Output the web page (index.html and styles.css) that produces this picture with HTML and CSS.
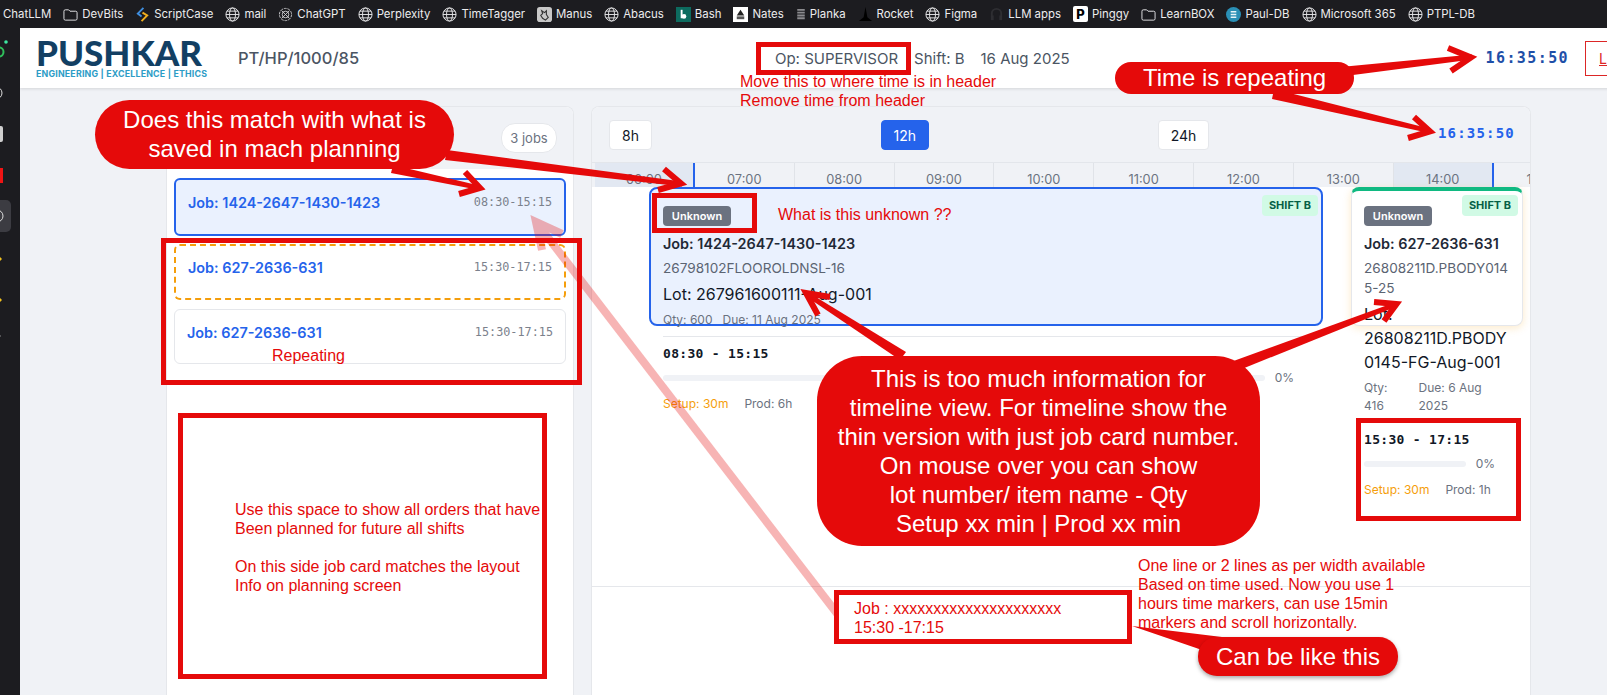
FILE: index.html
```html
<!DOCTYPE html>
<html>
<head>
  <meta charset="utf-8">
  <title>Shift Timeline</title>
  <link rel="stylesheet" href="styles.css">
</head>
<body>
  <svg class="defs" width="0" height="0">
    <symbol id="globe" viewBox="0 0 16 16">
      <g fill="none" stroke="#e8e8ea" stroke-width="1">
        <circle cx="8" cy="8" r="7"/>
        <ellipse cx="8" cy="8" rx="3.2" ry="7"/>
        <path d="M1 8h14M2 4.4h12M2 11.6h12"/>
      </g>
    </symbol>
    <symbol id="folder" viewBox="0 0 16 16">
      <path d="M1 4.5a1.500 1.500 0 0 1 1.500-1.500h3.500l1.500 1.500h6a1.500 1.500 0 0 1 1.500 1.500v6.500a1.500 1.500 0 0 1-1.500 1.500h-11a1.500 1.500 0 0 1-1.500-1.500z" fill="none" stroke="#e8e8ea"/>
    </symbol>
  </svg>

  <!-- browser bookmarks -->
  <div class="bookmarks">
    <span class="bm">ChatLLM</span>
    <span class="bm"><svg class="ic"><use href="#folder"/></svg>DevBits</span>
    <span class="bm"><svg class="ic" viewBox="0 0 16 16"><path d="M9 1 3 7l4 3" fill="none" stroke="#3f8fe0" stroke-width="2"/><path d="M8 6l5 3-6 6" fill="none" stroke="#f2b01e" stroke-width="2"/></svg>ScriptCase</span>
    <span class="bm"><svg class="ic"><use href="#globe"/></svg>mail</span>
    <span class="bm"><svg class="ic" viewBox="0 0 16 16"><g fill="none" stroke="#c9c9cc"><circle cx="8" cy="8" r="6.500" stroke-dasharray="3 1"/><circle cx="8" cy="8" r="3.500"/><path d="M4 4l8 8M12 4l-8 8"/></g></svg>ChatGPT</span>
    <span class="bm"><svg class="ic"><use href="#globe"/></svg>Perplexity</span>
    <span class="bm"><svg class="ic"><use href="#globe"/></svg>TimeTagger</span>
    <span class="bm"><svg class="ic" viewBox="0 0 16 16"><rect width="16" height="16" rx="3" fill="#c8c8c8"/><path d="M5 4l3 2 2-2v4l2 3-3 3-3-2-2-3 2-2z" fill="none" stroke="#333" stroke-width="1.200"/></svg>Manus</span>
    <span class="bm"><svg class="ic"><use href="#globe"/></svg>Abacus</span>
    <span class="bm"><svg class="ic" viewBox="0 0 16 16"><rect width="16" height="16" fill="#0d6b5f"/><path d="M6 3v9" stroke="#fff" stroke-width="2"/><circle cx="8.500" cy="10" r="2.500" fill="#fff"/></svg>Bash</span>
    <span class="bm"><svg class="ic" viewBox="0 0 16 16"><rect width="16" height="16" fill="#fff"/><path d="M4 9l4-6 4 6z" fill="#222"/><rect x="4" y="10" width="8" height="3" fill="#555"/></svg>Nates</span>
    <span class="bm"><svg class="ic ic-small" viewBox="0 0 10 16"><path d="M1 3h8M1 6h8M1 9h8M1 12h8" stroke="#8a8a8e" stroke-width="2"/></svg>Planka</span>
    <span class="bm"><svg class="ic" viewBox="0 0 16 16"><path d="M8 0 10 11 15 15H1L6 11z" fill="#000"/></svg>Rocket</span>
    <span class="bm"><svg class="ic"><use href="#globe"/></svg>Figma</span>
    <span class="bm"><svg class="ic" viewBox="0 0 16 16"><path d="M3 10V7a5 5 0 0 1 10 0v3" fill="none" stroke="#2e2e32" stroke-width="2"/><rect x="2" y="9" width="3" height="5" fill="#2e2e32"/><rect x="11" y="9" width="3" height="5" fill="#2e2e32"/></svg>LLM apps</span>
    <span class="bm"><span class="pinggy">P</span>Pinggy</span>
    <span class="bm"><svg class="ic"><use href="#folder"/></svg>LearnBOX</span>
    <span class="bm"><svg class="ic" viewBox="0 0 16 16"><circle cx="8" cy="8" r="8" fill="#2a8fb5"/><path d="M5 5h6M5 8h6M5 11h6" stroke="#e6f4f8" stroke-width="1.500"/></svg>Paul-DB</span>
    <span class="bm"><svg class="ic"><use href="#globe"/></svg>Microsoft 365</span>
    <span class="bm"><svg class="ic"><use href="#globe"/></svg>PTPL-DB</span>
  </div>

  <div class="window">
    <!-- edge of the browser sidebar -->
    <svg class="side-strip" width="20" height="667" viewBox="0 0 20 667">
      <circle cx="-1" cy="24" r="4.500" fill="none" stroke="#2fbf5b" stroke-width="2"/>
      <circle cx="6" cy="14" r="1.800" fill="#3ee6a0"/>
      <circle cx="-4" cy="65" r="6" fill="none" stroke="#ddd"/>
      <rect x="-8" y="98" width="11" height="16" rx="2" fill="#cfcfcf"/>
      <rect x="-8" y="140" width="11" height="15" fill="#f01414"/>
      <rect x="-6" y="172" width="17" height="32" rx="5" fill="#3c3c42"/>
      <circle cx="-3" cy="188" r="6" fill="none" stroke="#ddd"/>
      <path d="M0 229l2 2-2 2z" fill="#f2c21e"/>
      <path d="M0 270l2 2-2 2z" fill="#f2c21e"/>
      <path d="M0 308h1" stroke="#888"/>
    </svg>

    <div class="app">
      <header class="top-header">
        <div class="hdr-left">
          <div class="logo">
            <div class="logo-name">PUSHKAR</div>
            <div class="logo-tag">ENGINEERING | EXCELLENCE | ETHICS</div>
          </div>
          <div class="machine">PT/HP/1000/85</div>
        </div>
        <div class="hdr-center">
          <span>Op: SUPERVISOR</span>
          <span>Shift: B</span>
          <span>16 Aug 2025</span>
        </div>
        <div class="hdr-right">
          <span class="clock">16:35:50</span>
          <a class="logout">Logout</a>
        </div>
      </header>

      <main class="content">
        <section class="panel jobs-panel">
          <div class="panel-head">
            <span class="count-pill">3 jobs</span>
          </div>
          <div class="job-list">
            <div class="job-item active">
              <span class="job-no">Job: 1424-2647-1430-1423</span>
              <span class="job-time">08:30-15:15</span>
            </div>
            <div class="job-item next">
              <span class="job-no">Job: 627-2636-631</span>
              <span class="job-time">15:30-17:15</span>
            </div>
            <div class="job-item last">
              <span class="job-no">Job: 627-2636-631</span>
              <span class="job-time">15:30-17:15</span>
            </div>
          </div>
        </section>

        <section class="panel timeline-panel">
          <div class="range-bar">
            <button class="range-btn">8h</button>
            <button class="range-btn on">12h</button>
            <button class="range-btn">24h</button>
            <span class="range-clock">16:35:50</span>
          </div>
          <div class="axis">
            <div class="hour shade">06:00</div>
            <div class="hour">07:00</div>
            <div class="hour">08:00</div>
            <div class="hour">09:00</div>
            <div class="hour">10:00</div>
            <div class="hour">11:00</div>
            <div class="hour">12:00</div>
            <div class="hour">13:00</div>
            <div class="hour shade">14:00</div>
            <div class="hour">15:00</div>
          </div>
          <div class="track">
            <div class="block block-running">
              <span class="shift-tag">SHIFT B</span>
              <span class="status">Unknown</span>
              <div class="b-job">Job: 1424-2647-1430-1423</div>
              <div class="b-item">26798102FLOOROLDNSL-16</div>
              <div class="b-lot">Lot: 267961600111-Aug-001</div>
              <div class="b-meta"><span>Qty: 600</span><span>Due: 11 Aug 2025</span></div>
              <div class="b-time">08:30 - 15:15</div>
              <div class="b-progress"><div class="bar"></div><span>0%</span></div>
              <div class="b-split"><span class="setup">Setup: 30m</span><span>Prod: 6h</span></div>
            </div>
            <div class="block block-next">
              <span class="shift-tag">SHIFT B</span>
              <span class="status">Unknown</span>
              <div class="b-job">Job: 627-2636-631</div>
              <div class="b-item">26808211D.PBODY0145-25</div>
              <div class="b-lot">Lot: 26808211D.PBODY0145-FG-Aug-001</div>
              <div class="b-meta"><span>Qty: 416</span><span>Due: 6 Aug 2025</span></div>
              <div class="b-time">15:30 - 17:15</div>
              <div class="b-progress"><div class="bar"></div><span>0%</span></div>
              <div class="b-split"><span class="setup">Setup: 30m</span><span>Prod: 1h</span></div>
            </div>
          </div>
        </section>
      </main>
    </div>
  </div>

  <!-- review markup drawn over the screenshot -->
  <div class="markup">
    <svg class="arrows" width="1607" height="695" viewBox="0 0 1607 695">
      <g class="pale">
        <path d="M842 620 536 222"/>
        <path d="M562 234 536 222 542 250"/>
      </g>
      <g class="solid">
        <polygon points="1330,68 1472,54.500 1472,59.500 1330,78"/>
        <path d="M1448 48 1471 57.500 1451 71"/>
        <polygon points="1274,89 1431,129 1429,133 1272,99"/>
        <path d="M1414 117 1430 131.500 1408 138"/>
        <polygon points="393,165 481,186 479,190 391,173"/>
        <path d="M465 172 480 188 459 194"/>
        <polygon points="447,150 682,181.500 682,186.500 445,160"/>
        <path d="M664 169 681 183.500 658 190"/>
        <polygon points="906,352 806,291 804,295 900,360"/>
        <path d="M830 297 806 293 818 315"/>
        <polygon points="1228,363 1396,302 1398,306 1232,373"/>
        <path d="M1374 302 1396.500 304 1384 321"/>
        <polygon points="1132,626 1222,637 1202,650"/>
      </g>
    </svg>

    <div class="box box-op"></div>
    <div class="box box-unknown"></div>
    <div class="box box-list"></div>
    <div class="box box-future"></div>
    <div class="box box-times"></div>

    <div class="note note-move">Move this to where time is in header<br>Remove time from header</div>
    <div class="note note-repeat">Repeating</div>
    <div class="note note-unknown">What is this unknown ??</div>
    <div class="note note-future">Use this space to show all orders that have<br>Been planned for future all shifts<br><br>On this side job card matches the layout<br>Info on planning screen</div>
    <div class="note note-width">One line or 2 lines as per width available<br>Based on time used. Now you use 1<br>hours time markers, can use 15min<br>markers and scroll horizontally.</div>

    <div class="box box-thin">Job : xxxxxxxxxxxxxxxxxxxxx<br>15:30 -17:15</div>

    <div class="bubble bub-match">Does this match with what is<br>saved in mach planning</div>
    <div class="bubble bub-time">Time is repeating</div>
    <div class="bubble bub-info">This is too much information for<br>timeline view. For timeline show the<br>thin version with just job card number.<br>On mouse over you can show<br>lot number/ item name - Qty<br>Setup xx min | Prod xx min</div>
    <div class="bubble bub-like">Can be like this</div>
  </div>
</body>
</html>
```

FILE: styles.css
```css
html, body {
  margin: 0;
  padding: 0;
  width: 1607px;
  height: 695px;
  overflow: hidden;
  background: #1c1c20;
  font-family: "Inter", "Liberation Sans", sans-serif;
  color: #1f2937;
}

.defs {
  position: absolute;
}

/* bookmarks */
.bookmarks {
  height: 28px;
  display: flex;
  align-items: center;
  gap: 12px;
  padding-left: 3px;
  background: #1c1c20;
  color: #ececee;
  font-size: 11.4px;
  white-space: nowrap;
  overflow: hidden;
}

.bm {
  display: flex;
  align-items: center;
  gap: 4px;
}

.ic {
  width: 15px;
  height: 15px;
  flex: none;
}

.ic-small {
  width: 10px;
}

.pinggy {
  width: 15px;
  height: 16px;
  flex: none;
  background: #fff;
  border-radius: 2px;
  color: #000;
  font-size: 13px;
  font-weight: 800;
  line-height: 16px;
  text-align: center;
}

/* window */
.window {
  display: flex;
  height: 667px;
}

.side-strip {
  flex: none;
  display: block;
}

.app {
  width: 1587px;
  background: #f0f2f6;
  overflow: hidden;
}

.top-header {
  width: 1651px;
  height: 60px;
  box-sizing: border-box;
  padding: 0 16px;
  display: flex;
  align-items: center;
  justify-content: space-between;
  background: #fff;
  box-shadow: 0 1px 3px rgba(0, 0, 0, 0.12);
  position: relative;
}

.hdr-left {
  display: flex;
  align-items: center;
  gap: 32px;
}

.logo {
  width: 170px;
}

.logo-name {
  color: #123f63;
  font-family: "Lato", "Liberation Sans", sans-serif;
  font-size: 35px;
  font-weight: 900;
  line-height: 30px;
  white-space: nowrap;
}

.logo-tag {
  margin-top: 1px;
  color: #2c9cc6;
  font-size: 8.800px;
  font-weight: 700;
  line-height: 11px;
  letter-spacing: 0.2px;
  white-space: nowrap;
}

.machine {
  color: #4b5563;
  font-size: 16.500px;
  font-weight: 500;
}

.hdr-center {
  display: flex;
  gap: 16px;
  color: #4b5563;
  font-size: 15px;
}

.hdr-right {
  display: flex;
  align-items: center;
  gap: 16px;
}

.clock {
  color: #1e4fa8;
  font-family: "DejaVu Sans Mono", monospace;
  font-size: 15px;
  font-weight: 700;
  letter-spacing: 1.400px;
}

.logout {
  display: block;
  width: 70px;
  box-sizing: border-box;
  padding: 8px 13px;
  border: 1px solid #dc2626;
  color: #dc2626;
  font-size: 14px;
  text-decoration: underline;
}

/* main area */
.content {
  display: flex;
  gap: 17px;
  padding: 18px 0 0 146px;
  height: 607px;
  box-sizing: border-box;
}

.panel {
  border: 1px solid #e5e7eb;
  border-bottom: 0;
  border-radius: 8px 8px 0 0;
  box-sizing: border-box;
  overflow: hidden;
}

.jobs-panel {
  width: 408px;
  flex: none;
  background: #fff;
}

.panel-head {
  height: 62px;
  box-sizing: border-box;
  padding: 16px 16px 0 0;
  display: flex;
  justify-content: flex-end;
  align-items: flex-start;
  background: #f0f2f6;
}

.count-pill {
  width: 56px;
  height: 30px;
  box-sizing: border-box;
  border: 1px solid #e5e7eb;
  border-radius: 14px;
  background: #fff;
  color: #6b7280;
  font-size: 13px;
  line-height: 28px;
  text-align: center;
}

.job-list {
  padding: 9px 7px;
  display: flex;
  flex-direction: column;
  gap: 8px;
}

.job-item {
  height: 56px;
  box-sizing: border-box;
  padding: 13px 12px;
  display: flex;
  justify-content: space-between;
  border: 1px solid #e5e7eb;
  border-radius: 6px;
  background: #fff;
}

.job-item.active {
  height: 58px;
  border: 2px solid #2563eb;
  background: #eaf1fe;
}

.job-item.next {
  padding-top: 12px;
  border: 2px dashed #f59e0b;
}

.job-item.last {
  height: 55px;
  margin-top: 1px;
}

.job-no {
  color: #2563eb;
  font-size: 14.400px;
  font-weight: 600;
  line-height: 20px;
}

.job-time {
  color: #7b818c;
  font-family: "DejaVu Sans Mono", monospace;
  font-size: 11.800px;
  line-height: 18px;
}

.timeline-panel {
  width: 940px;
  flex: none;
  background: #fff;
}

.range-bar {
  height: 56px;
  box-sizing: border-box;
  padding: 13px 15px 0 17px;
  display: flex;
  justify-content: space-between;
  align-items: flex-start;
  background: #f0f2f6;
  border-bottom: 1px solid #e3e6eb;
}

.range-btn {
  height: 30px;
  padding: 0 12px;
  border: 1px solid #e5e7eb;
  border-radius: 4px;
  background: #fff;
  color: #111827;
  font-family: "Inter", sans-serif;
  font-size: 14px;
}

.range-btn.on {
  background: #2563eb;
  border-color: #2563eb;
  color: #fff;
}

.range-clock {
  margin-top: 5px;
  color: #2563eb;
  font-family: "DejaVu Sans Mono", monospace;
  font-size: 14px;
  font-weight: 700;
  letter-spacing: 1.200px;
}

.axis {
  height: 24px;
  padding-left: 3px;
  display: flex;
  background: #f0f2f6;
  white-space: nowrap;
}

.hour {
  width: 99.850px;
  height: 24px;
  flex: none;
  box-sizing: border-box;
  border-right: 1px solid #e0e3e8;
  color: #6b7280;
  font-size: 12.800px;
  line-height: 34px;
  text-align: center;
  overflow: hidden;
}

.hour.shade {
  background: #e2e8f2;
  border-right: 2px solid #2563eb;
}

.track {
  position: relative;
  height: 399px;
  border-bottom: 1px solid #e5e7eb;
  background: #fff;
}

.block {
  position: absolute;
  top: 0;
  height: 139px;
  box-sizing: border-box;
  border-radius: 8px;
  font-size: 12px;
}

.block-running {
  left: 57px;
  width: 674px;
  padding: 17px 12px 0 12px;
  border: 2px solid #2563eb;
  background: #eaf1fe;
}

.block-next {
  left: 759px;
  width: 172px;
  padding: 15px 12px 0 12px;
  border: 1px solid #e5e7eb;
  border-top: 4px solid #10b981;
  background: #fff;
  box-shadow: 0 2px 8px rgba(245, 158, 11, 0.22);
}

.shift-tag {
  position: absolute;
  top: 6px;
  right: 3px;
  width: 56px;
  height: 21px;
  border-radius: 4px;
  background: #d1fae5;
  color: #065f46;
  font-size: 11px;
  font-weight: 700;
  line-height: 21px;
  text-align: center;
}

.block-next .shift-tag {
  top: 4px;
  right: 4px;
}

.status {
  display: block;
  width: 68px;
  height: 20px;
  border-radius: 4px;
  background: #6b7280;
  color: #fff;
  font-size: 11px;
  font-weight: 600;
  line-height: 20px;
  text-align: center;
}

.b-job {
  margin-top: 8px;
  font-size: 14.400px;
  font-weight: 600;
  line-height: 20px;
}

.b-item {
  margin-top: 4px;
  color: #5b6472;
  font-size: 13.600px;
  line-height: 20px;
  overflow-wrap: anywhere;
}

.b-lot {
  margin-top: 4px;
  color: #111827;
  font-size: 16px;
  line-height: 24px;
  overflow-wrap: anywhere;
}

.b-meta {
  margin-top: 5px;
  display: flex;
  gap: 10px;
  color: #6b7280;
  line-height: 18px;
}

.b-time {
  margin-top: 7px;
  padding-top: 8px;
  border-top: 1px solid #e5e7eb;
  color: #111827;
  font-family: "DejaVu Sans Mono", monospace;
  font-size: 13px;
  font-weight: 700;
  letter-spacing: 0.3px;
  line-height: 18px;
}

.b-progress {
  margin-top: 6px;
  padding-right: 15px;
  display: flex;
  align-items: center;
  gap: 10px;
  color: #6b7280;
  line-height: 18px;
}

.bar {
  flex: 1;
  height: 6px;
  border-radius: 3px;
  background: #f0f2f6;
}

.b-split {
  margin-top: 8px;
  display: flex;
  gap: 16px;
  color: #6b7280;
  line-height: 18px;
}

.setup {
  color: #f59e0b;
}

/* review markup */
.markup {
  position: absolute;
  left: 0;
  top: 0;
  width: 1607px;
  height: 695px;
  font-family: "Liberation Sans", Arial, sans-serif;
}

.arrows {
  position: absolute;
  left: 0;
  top: 0;
}

.arrows path {
  fill: none;
  stroke-linejoin: miter;
}

.solid polygon {
  fill: #e50a0a;
}

.solid path {
  stroke: #e50a0a;
  stroke-width: 6px;
}

.pale {
  opacity: 0.3;
}

.pale path {
  stroke: #e50a0a;
  stroke-width: 8px;
}

.box {
  position: absolute;
  box-sizing: border-box;
  border: 5px solid #e50a0a;
}

.box-op {
  left: 756px;
  top: 42px;
  width: 155px;
  height: 33px;
}

.box-unknown {
  left: 652px;
  top: 193px;
  width: 105px;
  height: 40px;
}

.box-list {
  left: 161px;
  top: 238px;
  width: 421px;
  height: 147px;
}

.box-future {
  left: 178px;
  top: 413px;
  width: 369px;
  height: 266px;
}

.box-times {
  left: 1356px;
  top: 418px;
  width: 165px;
  height: 103px;
}

.box-thin {
  left: 834px;
  top: 590px;
  width: 298px;
  height: 54px;
  padding: 4px 15px;
  background: #fff;
  color: #e50a0a;
  font-size: 16px;
  line-height: 19px;
}

.note {
  position: absolute;
  color: #e50a0a;
  font-size: 16px;
  line-height: 19px;
  white-space: nowrap;
}

.note-move {
  left: 740px;
  top: 72px;
}

.note-repeat {
  left: 272px;
  top: 346px;
}

.note-unknown {
  left: 778px;
  top: 205px;
}

.note-future {
  left: 235px;
  top: 500px;
}

.note-width {
  left: 1138px;
  top: 556px;
}

.bubble {
  position: absolute;
  box-sizing: border-box;
  display: flex;
  align-items: center;
  justify-content: center;
  background: #e50a0a;
  color: #fff;
  text-align: center;
  white-space: nowrap;
}

.bub-match {
  left: 95px;
  top: 100px;
  width: 359px;
  height: 69px;
  padding-bottom: 2px;
  border-radius: 35px;
  font-size: 24px;
  line-height: 29px;
}

.bub-time {
  left: 1115px;
  top: 62px;
  width: 239px;
  height: 32px;
  border-radius: 16px;
  font-size: 24px;
}

.bub-info {
  left: 817px;
  top: 356px;
  width: 443px;
  height: 190px;
  border-radius: 45px;
  font-size: 24px;
  line-height: 29px;
}

.bub-like {
  left: 1198px;
  top: 637px;
  width: 200px;
  height: 39px;
  border-radius: 19px;
  font-size: 24px;
  box-shadow: 0 2px 4px rgba(0, 0, 0, 0.35);
}
```
